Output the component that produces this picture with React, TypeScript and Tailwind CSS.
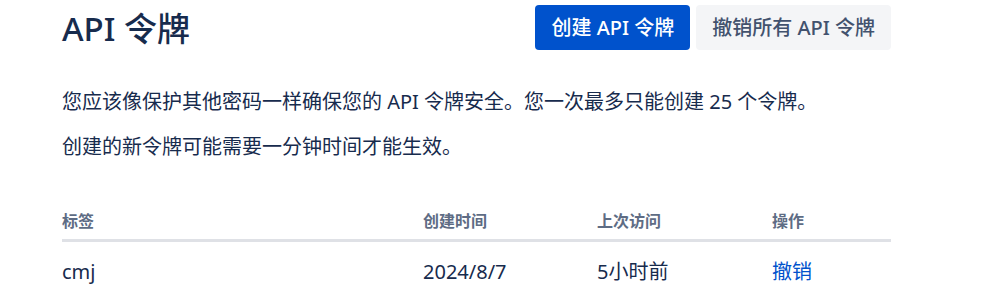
const font = { fontFamily: '"Noto Sans", "Noto Sans CJK SC", sans-serif' };

const columns = [
  { label: "标签", width: "w-[361px]" },
  { label: "创建时间", width: "w-[174px]" },
  { label: "上次访问", width: "w-[175px]" },
  { label: "操作", width: "w-[119px]" },
];

const tokens = [{ label: "cmj", created: "2024/8/7", lastAccess: "5小时前" }];

export default function App() {
  return (
    <div className="min-h-[307px] bg-white text-[#172B4D]" style={font}>
      <div className="ml-[62px] w-[829px] pt-[5px]">
        <div className="flex h-[45px] items-center justify-between">
          <h1 className="mt-[2px] text-[33px] font-medium leading-none">API 令牌</h1>
          <div className="flex h-full gap-[6px]">
            <button className="rounded-[4px] bg-[#0052CC] px-4 text-[20px] font-medium text-white">
              创建 API 令牌
            </button>
            <button className="rounded-[4px] bg-[#F4F5F7] px-4 text-[20px] font-medium text-[#42526E]">
              撤销所有 API 令牌
            </button>
          </div>
        </div>

        <p className="mt-[37px] text-[20px] leading-[30px]">
          您应该像保护其他密码一样确保您的 API 令牌安全。您一次最多只能创建 25 个令牌。
        </p>
        <p className="mt-[15px] text-[20px] leading-[30px]">
          创建的新令牌可能需要一分钟时间才能生效。
        </p>

        <table className="mt-[47px] w-full table-fixed border-collapse">
          <thead>
            <tr className="border-b-[3px] border-[#DFE1E6]">
              {columns.map((col) => (
                <th
                  key={col.label}
                  className={`${col.width} pb-[6px] text-left text-[16px] font-bold leading-6 text-[#5E6C84]`}
                >
                  {col.label}
                </th>
              ))}
            </tr>
          </thead>
          <tbody>
            {tokens.map((token) => (
              <tr key={token.label} className="text-[20px] leading-[30px]">
                <td className="pt-[15px]">{token.label}</td>
                <td className="pt-[15px]">{token.created}</td>
                <td className="pt-[15px]">{token.lastAccess}</td>
                <td className="pt-[15px]">
                  <a href="#" className="text-[#0052CC]">
                    撤销
                  </a>
                </td>
              </tr>
            ))}
          </tbody>
        </table>
      </div>
    </div>
  );
}
